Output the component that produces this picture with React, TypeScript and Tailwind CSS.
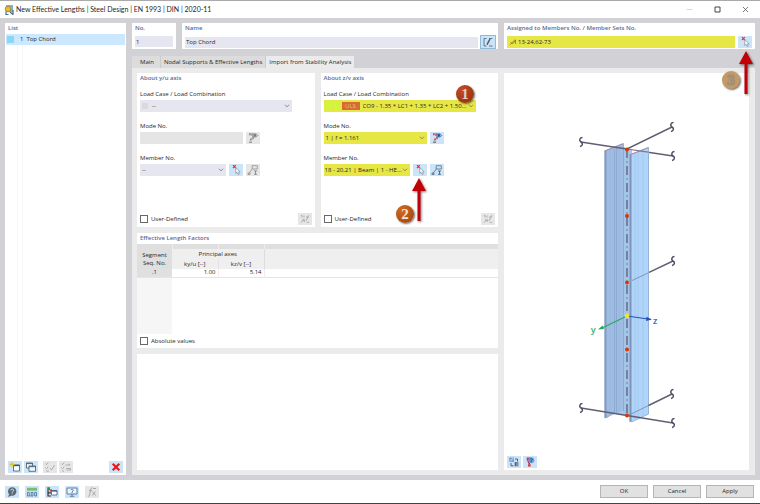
import React, { useState } from "react";

type IconName =
  | "edit" | "pick" | "props" | "member" | "apply" | "new" | "copy" | "check" | "swap"
  | "delete" | "help" | "units" | "tree" | "screen" | "fx" | "view" | "info";

const drawings: Record<IconName, React.ReactNode> = {
  edit: (
    <g fill="none" stroke="#4a5b6e" strokeWidth="0.8">
      <path d="M5.5 2.5H3V10H5.5M8 2.5H11.5M8 10H11.5" />
      <path d="M6 8.600 9 3" strokeWidth="1.5" />
    </g>
  ),
  pick: (
    <g>
      <path d="M4 1.2 6.8 4M6.8 1.2 4 4" stroke="#e8303a" strokeWidth="1.2" />
      <path d="M6.8 3.6V9.4L8.2 8.3 9.2 10.600 10.3 10.100 9.4 7.900H11.2Z" fill="#fff" stroke="#737b88" strokeWidth="0.6" />
    </g>
  ),
  props: (
    <g fill="none">
      <path d="M3 2.3H6.5L7.8 4 6.8 6.3 5 7.3 4.6 9" stroke="#d85050" strokeWidth="2" strokeDasharray="1.8 0.5" />
      <path d="M5.800 3.5C7.200 1.3 10.300 1.3 11.700 3.5 10.300 5.5 7.200 5.5 5.800 3.5Z" fill="#a9c2e8" stroke="#355d9c" strokeWidth="0.8" />
      <circle cx="8.8" cy="3.4" r="1.3" fill="#26508f" />
      <path d="M3 10.2H6" stroke="#555" strokeWidth="1" />
    </g>
  ),
  member: (
    <g fill="none" stroke="#587089" strokeWidth="0.8">
      <path d="M6.2 1.7H11.3V5H6.2ZM6.2 5 2.8 9.8M2 9H4V10.5H2Z" />
      <path d="M8 7H11M9.5 7V10.3M8 10.3H11" stroke="#41566c" />
    </g>
  ),
  apply: (
    <g fill="none" stroke="#8d8d8d" strokeWidth="0.9">
      <path d="M3 2.5H4V4.5M6 2.5V4.5M8 7.8 10.8 2.2M8.2 4H10.8M3 9.7 6.2 6.2M4 7H6.3V9M8.7 9.3H11" />
    </g>
  ),
  new: (
    <g>
      <path d="M5.5 4H11.5V10H5.5Z" fill="#fff" stroke="#40546b" strokeWidth="0.8" />
      <path d="M5.5 4.5H11.5" stroke="#40546b" strokeWidth="1.3" />
      <path d="M4 0.800V6.200M1.300 3.5H6.700M2.2 1.7 5.8 5.3M5.8 1.7 2.2 5.3" stroke="#d8c81c" strokeWidth="0.900" />
    </g>
  ),
  copy: (
    <g fill="#eef6fc" stroke="#40546b" strokeWidth="0.8">
      <path d="M2.5 2H8.5V7H2.5ZM2.5 2.6H8.5" />
      <path d="M5 5H11.5V10.3H5ZM5 5.7H11.5" />
    </g>
  ),
  check: (
    <path d="M2.5 2.5 3.5 3.7 5.3 1.5M2.5 6.5 3.5 7.8 5.3 5.5M3 10H6M7 7 8.5 9 11.5 4" fill="none" stroke="#909090" strokeWidth="0.9" />
  ),
  swap: (
    <path d="M2.5 2.5 3.5 3.7 5.3 1.5M2.5 6.5 3.5 7.8 5.3 5.5M3 10H5M6.5 4H11M9.7 2.7 11.2 4M7 7.5H11.5V9H7.5" fill="none" stroke="#909090" strokeWidth="0.9" />
  ),
  delete: <path d="M3.7 2.700 10.300 9.3M10.300 2.700 3.7 9.3" stroke="#f01414" strokeWidth="2.1" />,
  help: (
    <g>
      <circle cx="7.2" cy="5.5" r="4.2" fill="#5c6876" />
      <path d="M4.2 8 3 10.900 6.5 9.4Z" fill="#5c6876" />
      <path d="M5.9 4.4C5.9 2.5 8.9 2.8 8.6 4.5 8.4 5.4 7.2 5.4 7.2 6.7M7.2 7.5V8.3" fill="none" stroke="#e8f4ff" strokeWidth="0.9" />
    </g>
  ),
  units: (
    <g>
      <path d="M2 1.8H12V4.7H2Z" fill="#79bd6c" />
      <path d="M2.4 6.4H4.3V10H2.4ZM6.2 6.4H8V10H6.2ZM9.7 6.4H11.5V10H9.7Z" fill="none" stroke="#3d6da1" strokeWidth="0.8" />
      <path d="M5.2 9.5V10.5" stroke="#3d6da1" strokeWidth="0.8" />
    </g>
  ),
  tree: (
    <g>
      <path d="M2.2 1.200H5V4H2.2Z" fill="#1ba33a" /><path d="M4.7 3.2H7V5.7H4.7Z" fill="#e94a3c" />
      <path d="M3 4V10.5M3 6.8H6M3 10H6" stroke="#333" strokeWidth="1.2" />
      <path d="M6.5 4.5H12V9H6.5Z" fill="#fff" stroke="#405d7d" strokeWidth="0.8" />
      <path d="M6.5 5H12" stroke="#405d7d" strokeWidth="1.2" />
    </g>
  ),
  screen: (
    <g fill="none" stroke="#54749a" strokeWidth="0.9">
      <path d="M2 2H12V8H2ZM7 8V10M4.800 10.3H9.3" fill="#e8f4ff" />
      <path d="M5.500 4.2C6.500 2.5 9 3.3 8 5L7 6V7.2" />
    </g>
  ),
  fx: (
    <g fill="none" stroke="#858585" strokeWidth="0.9">
      <path d="M7.5 2C6 1.5 5.8 2.8 5.5 4L4.7 9C4.5 10.5 3.5 10.5 3 10M4 4.5H7M7.5 5.5 10.5 9.5M10.5 5.5 7.3 9.5M8 2.5H11" />
    </g>
  ),
  view: (
    <g>
      <path d="M2.2 1.500H7V6H2.2Z" fill="#6da3e0" />
      <path d="M3 5.4 6.3 2" stroke="#fff" strokeWidth="0.7" />
      <path d="M8 3H10.5V5.5M4 7V9.800H6.5" fill="none" stroke="#3c536b" strokeWidth="0.9" />
      <path d="M7.5 6H11.5V10.3H7.5Z" fill="#7b90a8" />
      <path d="M8.5 6V10.3" stroke="#3c536b" strokeWidth="0.7" />
    </g>
  ),
  info: (
    <g>
      <path d="M3.700 1.500H7V4.5H3.700ZM5 8.300H7.7V10.5H5Z" fill="#df3439" />
      <path d="M4.800 4.5 6.5 8" stroke="#bd2830" strokeWidth="1.5" />
      <circle cx="8.2" cy="4.2" r="3" fill="#6a9ada" />
      <path d="M7 3.3C7.200 2 9.600 2.300 9.200 3.900L8.200 4.800V5.900" stroke="#204f96" strokeWidth="0.8" fill="none" />
    </g>
  ),
};

function Tool({ icon, label, off = false, framed = false }: { icon: IconName; label: string; off?: boolean; framed?: boolean }) {
  return (
    <button
      type="button"
      aria-label={label}
      disabled={off}
      className={`flex h-3 w-[14px] shrink-0 items-center justify-center ${off ? "bg-[#e6e6e6]" : "bg-[#cce4f7]"} ${framed ? "outline outline-[#91b9d8]" : ""}`}
    >
      <svg viewBox="0 0 14 12" className={`h-3 w-[14px] ${off ? "opacity-70 grayscale" : ""}`} aria-hidden="true">
        {drawings[icon]}
      </svg>
    </button>
  );
}

function Heading({ children }: { children: React.ReactNode }) {
  return <h2 className="h-[11px] shrink-0 text-[6px] leading-[11px] font-semibold text-[#5a6b94]">{children}</h2>;
}

function Chevron() {
  return (
    <svg viewBox="0 0 6 4" className="pointer-events-none absolute top-1 right-[2px] h-1 w-[6px]" aria-hidden="true">
      <path d="M1 0.7 3 2.9 5 0.7" fill="none" stroke="#767676" strokeWidth="0.8" />
    </svg>
  );
}

function Combo({ id, value, width, className, children }: { id: string; value: string; width: string; className: string; children?: React.ReactNode }) {
  return (
    <div className={`relative h-3 ${width}`}>
      <select id={id} className={`h-3 w-full appearance-none overflow-hidden text-ellipsis rounded-none pr-[5px] leading-3 outline-none ${className}`}>
        <option>{value}</option>
      </select>
      {children}
      <Chevron />
    </div>
  );
}

function Field({ id, label, children }: { id: string; label: string; children: React.ReactNode }) {
  return (
    <div>
      <label htmlFor={id} className="block h-[11px] leading-[10px]">{label}</label>
      <div className="flex gap-[3px]">{children}</div>
    </div>
  );
}

function Tick({ label }: { label: string }) {
  return (
    <label className="flex items-center gap-[3px]">
      <input type="checkbox" className="size-2 appearance-none border border-[#686868] bg-white checked:bg-[#4b87c0]" />
      {label}
    </label>
  );
}

function UpArrow({ className }: { className: string }) {
  return (
    <svg viewBox="0 0 18 44" className={`pointer-events-none absolute z-10 drop-shadow-[1px_1px_1px_#00000080] ${className}`} aria-hidden="true">
      <path d="M9 0 16 13H10.5V43H7.5V13H2Z" fill="#c20008" />
    </svg>
  );
}

function Marker({ n, className }: { n: number; className: string }) {
  return (
    <span className={`pointer-events-none absolute z-10 flex size-[18px] items-center justify-center rounded-full font-['Liberation_Serif',serif] text-[15px] leading-none font-bold shadow-[1px_1px_2px_#00000090] ${className}`}>
      {n}
    </span>
  );
}

function AxisPanel({ axis, children }: { axis: string; children: React.ReactNode }) {
  return (
    <section className="relative flex h-[154px] min-w-0 flex-1 flex-col bg-white px-[3px] pb-[2px]">
      <Heading>About {axis} axis</Heading>
      <div className="mt-[5px] flex flex-col gap-[9px]">{children}</div>
      <div className="mt-auto flex items-center justify-between">
        <Tick label="User-Defined" />
        <Tool icon="apply" label="Apply factors" off />
      </div>
    </section>
  );
}

function Beam() {
  const brk = "M1.500 -4.500C-1 -4.500 -2.500 -1.500 0 0S1.500 4 -1 4.500";
  const ends: [number, number][] = [[77, 69], [168, 54], [169, 83], [169, 188], [77, 335], [168, 321], [169, 350]];
  return (
    <svg viewBox="0 0 245 397" className="h-full w-full" role="img" aria-label="Member with nodal supports and local axes">
      <path d="M77 69 101 72.700M144 79.200 169 83M144.500 199.700 169 188" stroke="#625e72" strokeWidth="1.4" />
      <path d="M113 73 128 76V342H113Z" fill="#a8c9ee" />
      <path d="M100.500 78 119.500 70.500V337L102 345H100.500Z" fill="#9fbde2" />
      <path d="M119.500 75 126 76V342L119.500 340Z" fill="#a3c5ea" />
      <path d="M100.500 78H102.500V344.500L100.500 345.500Z" fill="#8599c0" />
      <path d="M125.500 82 144.500 74.500V341L127.500 349H125.500Z" fill="#b1d5fa" />
      <path d="M125.500 82H127.500V348.500L125.500 349Z" fill="#7f92b4" />
      <path d="M110.500 76V340M112.500 75V340M119.500 71V338" stroke="#84a2cb" strokeWidth="0.7" fill="none" />
      <path d="M115 74V339M106 77V343" stroke="#93b0d8" strokeWidth="0.5" fill="none" />
      <path d="M131 81V346M134 79V345M139 77V343" stroke="#9cc2ea" strokeWidth="0.6" fill="none" />
      <path d="M144.500 74.500V341" stroke="#86a4cc" strokeWidth="0.8" fill="none" />
      <path d="M127.500 349 144.500 341M102 345 105 343" stroke="#8299bb" strokeWidth="0.7" fill="none" />
      <path d="M100.500 78 119.500 70.500M125.500 82 144.500 74.500" stroke="#a38a9d" strokeWidth="1.2" fill="none" />
      <path d="M123 76 144 79.200" stroke="#8a7288" strokeWidth="1.2" />
      <path d="M101 72.700 123 76 168 54" stroke="#625e72" strokeWidth="1.4" fill="none" />
      <path d="M123 76V342" stroke="#514a5d" strokeWidth="1.1" strokeDasharray="9 3.500 1 3.500" />
      <path d="M128 207.500 144 200M123 343 144.500 332.500" stroke="#7391b6" strokeWidth="0.9" />
      <path d="M77 335 169 350M144.500 332.500 168 321" stroke="#625e72" strokeWidth="1.4" />
      <g fill="none" stroke="#514d65" strokeWidth="1.5">
        {ends.map(([x, y]) => <path key={`${x}-${y}`} d={brk} transform={`translate(${x} ${y})`} />)}
      </g>
      <path d="M123 243 98 255" stroke="#24a85b" strokeWidth="1.1" />
      <path d="M94 256.500 98.500 252.500 100 256Z" fill="#24a85b" />
      <path d="M123 243 144 246" stroke="#2551b8" strokeWidth="1.1" />
      <path d="M148 246.500 142.500 243.800 142 248Z" fill="#2551b8" />
      <g fill="#d93606">
        <circle cx="123" cy="76.500" r="2" /><circle cx="123" cy="143" r="2" />
        <circle cx="123" cy="209.500" r="2" /><circle cx="123" cy="276.500" r="2" /><circle cx="123" cy="342.500" r="2" />
      </g>
      <circle cx="123" cy="243" r="2.200" fill="#f7e519" />
      <text x="87" y="260" fontSize="9" fill="#24a85b" stroke="#24a85b" strokeWidth="0.2">y</text>
      <text x="149" y="251" fontSize="9" fill="#2551b8" stroke="#2551b8" strokeWidth="0.2">z</text>
    </svg>
  );
}

const yellow = "bg-[#e6e645]";
const lilac = "bg-[#e6e6f1]";

export default function App() {
  const [tab, setTab] = useState(2);
  const tabs = ["Main", "Nodal Supports & Effective Lengths", "Import from Stability Analysis"];
  return (
    <div className="flex min-h-screen flex-col border-t border-b border-t-[#aaaaaa] border-b-[#444444] bg-white font-['Open_Sans','Noto_Sans',sans-serif] text-[6px] text-[#262626]">
      <header className="flex h-[17px] shrink-0 items-center pr-[11px] pl-1">
        <svg viewBox="0 0 10 10" className="size-[10px]" aria-hidden="true">
          <path d="M2 0H9V7H2Z" fill="#7eb3d0" />
          <circle cx="4" cy="4" r="2.800" fill="#e4be32" stroke="#b08f2d" />
          <path d="M2 6.500V9.500H4.500M6 7 9 9.500V5" fill="none" stroke="#466d8b" strokeWidth="1.200" />
        </svg>
        <h1 className="ml-[2px] font-['Lato','Open_Sans',sans-serif] text-[7px]">New Effective Lengths | Steel Design | EN 1993 | DIN | 2020-11</h1>
        <div className="ml-auto flex gap-[21px]">
          <button type="button" aria-label="Minimize" disabled>
            <svg viewBox="0 0 7 7" className="size-[7px]"><path d="M0.500 3.500H6.500" stroke="#d0d0d0" strokeWidth="0.800" /></svg>
          </button>
          <button type="button" aria-label="Maximize">
            <svg viewBox="0 0 7 7" className="size-[7px]"><path d="M1 1H6V6H1Z" fill="none" stroke="#444" /></svg>
          </button>
          <button type="button" aria-label="Close">
            <svg viewBox="0 0 7 7" className="size-[7px]"><path d="M1 1 6 6M6 1 1 6" stroke="#555" strokeWidth="0.800" /></svg>
          </button>
        </div>
      </header>

      <div className="flex flex-1 gap-[6px] bg-[#d1d1d6] p-[5px]">
        <aside className="flex w-[121px] shrink-0 flex-col bg-white">
          <div className="pl-[3px]"><Heading>List</Heading></div>
          <button type="button" className="mx-px flex h-[11px] items-center bg-[#cce8ff] pl-px text-left">
            <span className="mr-[6px] size-[7px] bg-[#8bd6f5]" />
            <span className="mr-[3px]">1</span>Top Chord
          </button>
          <div className="ml-3 w-[6px] flex-1 border-x border-[#f7f7f7]" />
          <div className="flex items-center gap-[2px] p-[3px] pb-[2px]">
            <Tool icon="new" label="New" />
            <Tool icon="copy" label="Copy" />
            <div className="ml-[3px] flex gap-[2px]">
              <Tool icon="check" label="Select all" off />
              <Tool icon="swap" label="Invert selection" off />
            </div>
            <div className="ml-auto"><Tool icon="delete" label="Delete" /></div>
          </div>
        </aside>

        <main className="flex min-w-0 flex-1 flex-col">
          <div className="flex h-[26px] gap-[6px]">
            <section className="w-11 shrink-0 bg-white px-[3px]">
              <Heading><label htmlFor="no">No.</label></Heading>
              <input id="no" defaultValue="1" className={`mt-[2px] block h-[11px] w-full px-px outline-none ${lilac}`} />
            </section>
            <section className="min-w-0 flex-1 bg-white px-[3px]">
              <Heading><label htmlFor="name">Name</label></Heading>
              <div className="mt-[2px] flex items-center gap-[3px]">
                <input id="name" defaultValue="Top Chord" className={`block h-[11px] min-w-0 flex-1 px-px outline-none ${lilac}`} />
                <Tool icon="edit" label="Edit name" framed />
              </div>
            </section>
            <section className="relative w-[251px] shrink-0 bg-white px-[3px]">
              <Heading><label htmlFor="assigned">Assigned to Members No. / Member Sets No.</label></Heading>
              <div className="mt-[2px] flex gap-[3px]">
                <div className={`flex h-3 min-w-0 flex-1 items-center gap-px pl-[2px] ${yellow}`}>
                  <svg viewBox="0 0 8 8" className="size-2" aria-hidden="true">
                    <path d="M1 7 6 1.500" stroke="#d97b20" strokeWidth="0.900" />
                    <path d="M1.500 4.500 4 5.500 6.500 2V6" stroke="#4d9e35" strokeWidth="0.900" fill="none" />
                  </svg>
                  <input id="assigned" defaultValue="13-24,62-73" className="h-3 min-w-0 flex-1 bg-transparent outline-none" />
                </div>
                <Tool icon="pick" label="Select members" />
              </div>
              <UpArrow className="top-7 right-0 h-11 w-[18px]" />
              <Marker n={3} className="top-12 right-[15px] bg-[#c29a68] text-[#a59a8c] [text-shadow:0_0_1px_#5b5347]" />
            </section>
          </div>

          <div role="tablist" className="mt-[7px] flex h-3 shrink-0">
            {tabs.map((t, i) => (
              <button
                key={t}
                type="button"
                role="tab"
                aria-selected={tab === i}
                onClick={() => setTab(i)}
                className={`${i === 0 ? "pr-[6px] pl-2" : "px-[3px]"} ${tab === i ? "bg-[#ebebeb]" : "border-r border-[#cccccc] bg-[#dcdcdc]"}`}
              >
                {t}
              </button>
            ))}
          </div>

          <div className="flex flex-1 gap-[6px] bg-[#ebebeb] py-[5px] pr-[6px] pl-[5px]">
            <div className="flex min-w-0 flex-1 flex-col gap-[6px]">
              <div className="flex gap-[6px]">
                <AxisPanel axis="y/u">
                  <Field id="lc-y" label="Load Case / Load Combination">
                    <Combo id="lc-y" value="--" width="w-[152px]" className={`pl-3 ${lilac}`}>
                      <span className="absolute top-[3px] left-[2px] size-[6px] bg-[#dadada]" />
                    </Combo>
                  </Field>
                  <Field id="mode-y" label="Mode No.">
                    <input id="mode-y" disabled className="h-3 w-[103px] bg-[#e5e5e5]" />
                    <Tool icon="props" label="Mode details" off />
                  </Field>
                  <Field id="mem-y" label="Member No.">
                    <Combo id="mem-y" value="--" width="w-[86px]" className={`pl-[2px] ${lilac}`} />
                    <Tool icon="pick" label="Pick member" />
                    <Tool icon="member" label="Member details" off />
                  </Field>
                </AxisPanel>
                <AxisPanel axis="z/v">
                  <Field id="lc-z" label="Load Case / Load Combination">
                    <Combo id="lc-z" value="CO9 - 1.35 * LC1 + 1.35 * LC2 + 1.50..." width="w-[152px]" className={`pl-[39px] ${yellow}`}>
                      <span className="pointer-events-none absolute top-[2px] left-[2px] flex gap-[2px]">
                        <span className="h-2 w-[6px] bg-[#cdf83c]" />
                        <span className="h-2 w-[6px] bg-[#cdf83c]" />
                        <span className="h-2 w-[18px] bg-[#d66b38] text-center leading-2 text-[#e5c95a]">ULS</span>
                      </span>
                    </Combo>
                  </Field>
                  <Field id="mode-z" label="Mode No.">
                    <Combo id="mode-z" value="1 | f = 1.161" width="w-[103px]" className={`pl-[2px] ${yellow}`} />
                    <Tool icon="props" label="Mode details" />
                  </Field>
                  <Field id="mem-z" label="Member No.">
                    <Combo id="mem-z" value="18 - 20,21 | Beam | 1 - HE..." width="w-[86px]" className={`pl-px ${yellow}`} />
                    <Tool icon="pick" label="Pick member" />
                    <Tool icon="member" label="Member details" />
                  </Field>
                  <Marker n={1} className="top-3 right-6 bg-[radial-gradient(circle_at_35%_30%,#c64a25,#8e2b0b)] text-[#d9d0c8]" />
                  <Marker n={2} className="top-[132px] right-[84px] bg-[radial-gradient(circle_at_35%_30%,#d56a22,#98400a)] text-[#efe4d6]" />
                  <UpArrow className="top-[105px] right-[70px] h-11 w-[18px]" />
                </AxisPanel>
              </div>

              <section className="flex h-[115px] flex-col bg-white">
                <div className="pl-[3px]"><Heading>Effective Length Factors</Heading></div>
                <table className="w-full table-fixed border-collapse text-center">
                  <colgroup><col className="w-[35px]" /><col className="w-[46px]" /><col className="w-[46px]" /><col /></colgroup>
                  <thead className="bg-[#efefef]">
                    <tr className="h-[5px] bg-[#dfdfdf]">
                      <td className="border-r border-[#eeeeee]" /><td className="border-r border-[#eeeeee]" /><td className="border-r border-[#eeeeee]" /><td />
                    </tr>
                    <tr className="h-[10px] leading-2">
                      <th rowSpan={2} className="bg-[#dfdfdf] p-0 font-normal">Segment<br />Seq. No.</th>
                      <th colSpan={2} className="border-r border-[#dddddd] p-0 font-normal">Principal axes</th>
                      <th rowSpan={2} />
                    </tr>
                    <tr className="h-[10px] leading-2">
                      <th className="border-r border-[#e3e3e3] p-0 font-normal">ky/u [--]</th>
                      <th className="border-r border-[#dddddd] p-0 font-normal">kz/v [--]</th>
                    </tr>
                  </thead>
                  <tbody>
                    <tr className="h-2 border-b border-[#e5e5e5] leading-[7px]">
                      <td className="bg-[#e0e0e0] p-0">.1</td>
                      <td className="border-r border-[#eeeeee] p-0 pr-[2px] text-right">1.00</td>
                      <td className="border-r border-[#eeeeee] p-0 pr-[2px] text-right">5.14</td>
                      <td />
                    </tr>
                  </tbody>
                </table>
                <div className="w-[35px] flex-1 bg-[#f6f6f6]" />
                <div className="flex h-[14px] items-center pl-[3px]"><Tick label="Absolute values" /></div>
              </section>

              <section aria-label="Comment" className="flex-1 bg-white" />
            </div>

            <section aria-label="Preview" className="relative w-[245px] shrink-0 bg-white">
              <Beam />
              <div className="absolute bottom-[2px] left-[3px] flex gap-[2px]">
                <Tool icon="view" label="View settings" />
                <Tool icon="info" label="Display information" />
              </div>
            </section>
          </div>
        </main>
      </div>

      <footer className="flex h-[23px] shrink-0 items-center pr-[6px] pl-[5px]">
        <div className="flex gap-[6px]">
          <Tool icon="help" label="Help" />
          <Tool icon="units" label="Units" />
          <Tool icon="tree" label="Structure" />
          <Tool icon="screen" label="Display" />
          <Tool icon="fx" label="Formula" off />
        </div>
        <div className="ml-auto flex gap-[5px]">
          {["OK", "Cancel", "Apply"].map((t) => (
            <button key={t} type="button" className="h-[13px] w-12 border border-[#b5b5b5] bg-[#e1e1e1]">{t}</button>
          ))}
        </div>
      </footer>
    </div>
  );
}
